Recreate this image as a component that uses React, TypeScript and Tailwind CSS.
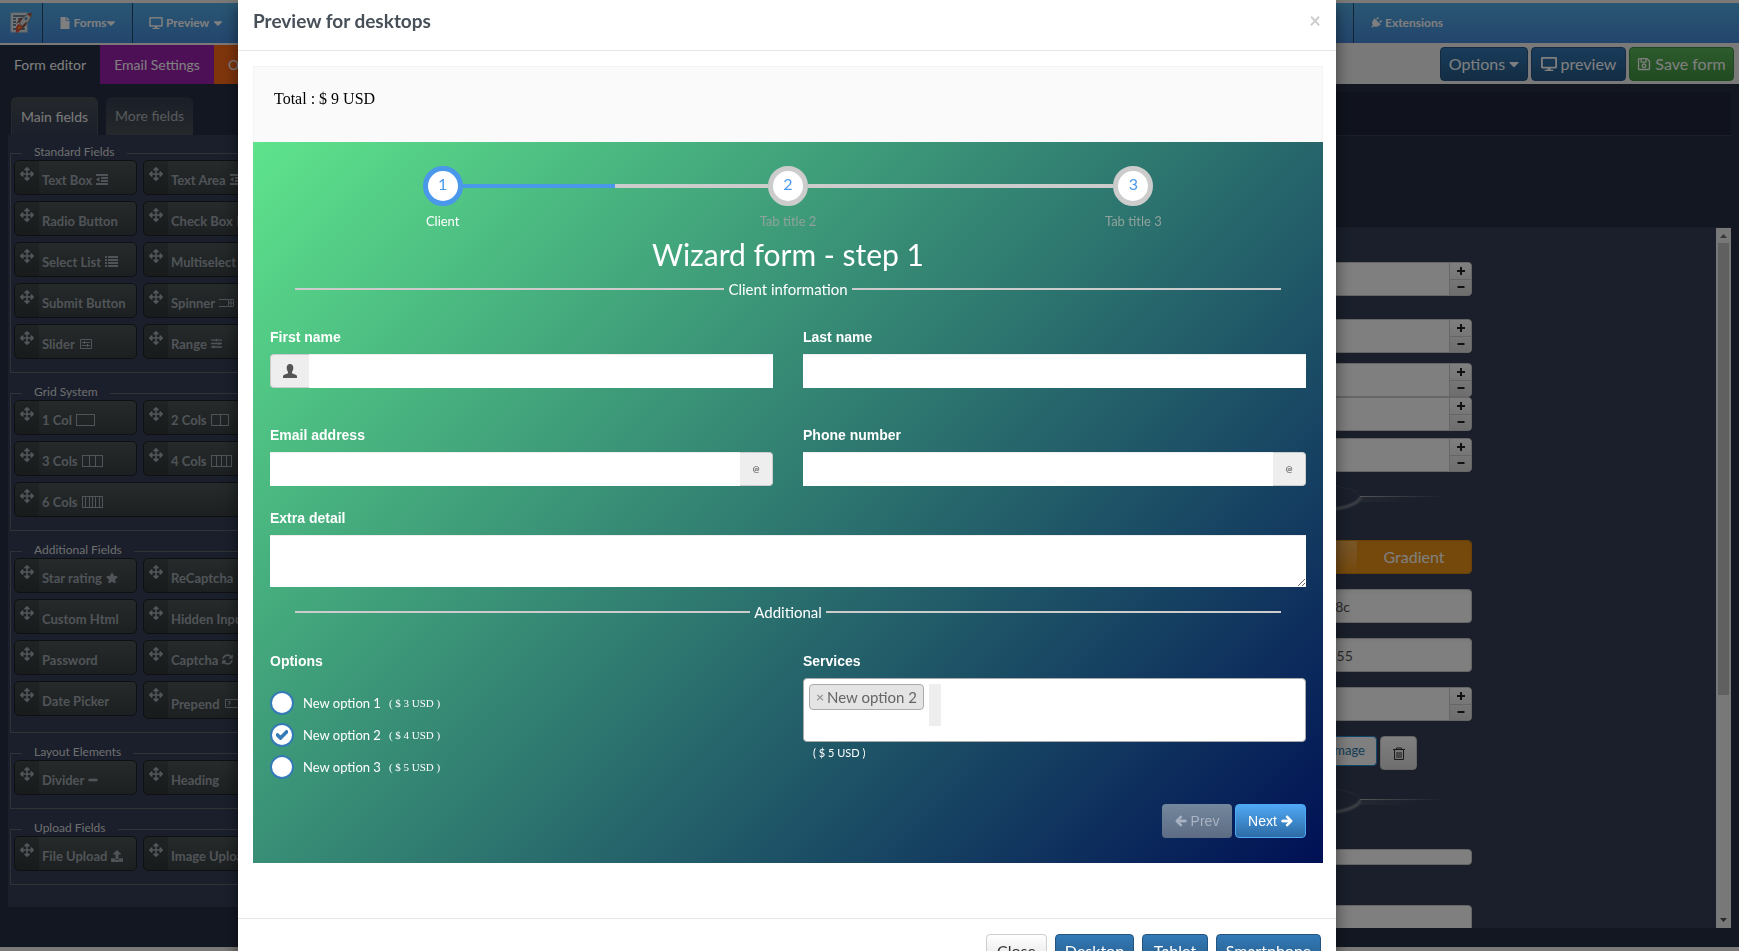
import type { ReactNode } from 'react';
import {
  FaArrowLeft,
  FaArrowRight,
  FaArrowsAlt,
  FaCaretDown,
  FaCheck,
  FaDesktop,
  FaFile,
  FaMinus,
  FaPlug,
  FaRegSave,
  FaSlidersH,
  FaStar,
  FaSyncAlt,
  FaUpload,
} from 'react-icons/fa';

interface Field {
  name: string;
  icon?: ReactNode;
  wide?: boolean;
  tall?: boolean;
}

interface FieldGroup {
  title: string;
  fields: Field[];
}

// Outlined box split into n columns
function ColsIcon({ n, width }: { n: number; width: number }) {
  const step = (width - 1) / n;
  return (
    <svg width={width} height="12" viewBox={`0 0 ${width} 12`} fill="none" stroke="currentColor">
      <rect x="0.5" y="0.5" width={width - 1} height="11" />
      {Array.from({ length: n - 1 }, (_, i) => (
        <path key={i} d={`M${Math.round(step * (i + 1)) + 0.5} 0V12`} />
      ))}
    </svg>
  );
}

function BoxIcon({ d }: { d: string }) {
  return (
    <svg width="15" height="12" viewBox="0 0 15 12" fill="none" stroke="currentColor">
      <path d={d} />
    </svg>
  );
}

function IndentIcon() {
  return (
    <svg width="12" height="11" viewBox="0 0 12 11" fill="currentColor">
      <path d="M0 0h12v2H0zM5 3h7v2H5zM5 6h7v2H5zM0 9h12v2H0zM3.500 3v5L0 5.500z" />
    </svg>
  );
}

function ListIcon() {
  return (
    <svg width="13" height="11" viewBox="0 0 13 11" fill="currentColor">
      <path d="M0 0h2v2H0zM0 3h2v2H0zM0 6h2v2H0zM0 9h2v2H0zM3 0h10v2H3zM3 3h10v2H3zM3 6h10v2H3zM3 9h10v2H3z" />
    </svg>
  );
}

const groups: FieldGroup[] = [
  {
    title: 'Standard Fields',
    fields: [
      { name: 'Text Box', icon: <IndentIcon /> },
      { name: 'Text Area', icon: <IndentIcon /> },
      { name: 'Radio Button' },
      { name: 'Check Box', icon: <BoxIcon d="M1 1h12v10H1zM4 5l3 3 4-5" /> },
      { name: 'Select List', icon: <ListIcon /> },
      { name: 'Multiselect' },
      { name: 'Submit Button' },
      { name: 'Spinner', icon: <BoxIcon d="M0 2.500h9M0 9.500h9M9.500 2.500h5v7h-5zM9.500 6h5M12 2v8" /> },
      { name: 'Slider', icon: <BoxIcon d="M1.500 1.500h11v9h-11zM3 4.500h8M5.500 3v3M3 7.500h8M8.500 6v3" /> },
      { name: 'Range', icon: <FaSlidersH className="h-[11px] w-[11px]" /> },
    ],
  },
  {
    title: 'Grid System',
    fields: [
      { name: '1 Col', icon: <ColsIcon n={1} width={19} /> },
      { name: '2 Cols', icon: <ColsIcon n={2} width={18} /> },
      { name: '3 Cols', icon: <ColsIcon n={3} width={21} /> },
      { name: '4 Cols', icon: <ColsIcon n={4} width={21} /> },
      { name: '6 Cols', icon: <ColsIcon n={6} width={21} />, wide: true },
    ],
  },
  {
    title: 'Additional Fields',
    fields: [
      { name: 'Star rating', icon: <FaStar className="h-3 w-3" /> },
      { name: 'ReCaptcha' },
      { name: 'Custom Html' },
      { name: 'Hidden Input' },
      { name: 'Password' },
      { name: 'Captcha', icon: <FaSyncAlt className="h-[11px] w-[11px]" /> },
      { name: 'Date Picker' },
      { name: 'Prepend', icon: <BoxIcon d="M1 1.500h14M1.500 1v8.500h14M4 3.500h2v2H5v2" />, tall: true },
    ],
  },
  {
    title: 'Layout Elements',
    fields: [{ name: 'Divider', icon: <FaMinus className="h-[10px] w-[10px] stroke-current stroke-[40]" /> }, { name: 'Heading' }],
  },
  {
    title: 'Upload Fields',
    fields: [{ name: 'File Upload', icon: <FaUpload className="h-3 w-3" /> }, { name: 'Image Upload' }],
  },
];

function Logo() {
  return (
    <svg width="22" height="22" viewBox="0 0 22 22">
      <rect x="1" y="1" width="16" height="19" fill="#e9eef2" stroke="#c5ced6" />
      <path d="M3 4h12M3 7h3M8 7h5M3 10h3M3 13h3M3 17h12" stroke="#46627a" strokeWidth="1.3" />
      <path d="M21.500 1c-5.500 1-10 5-12 10l3 3c5.500-2 8.500-7 9-13z" fill="#dcdcdc" stroke="#6f6f6f" strokeWidth="0.8" />
      <path d="M10 10l-4 2 4-6 3-.500zM12.500 13.500l-1 5 5-6v-3z" fill="#8e5547" />
      <circle cx="16" cy="6.5" r="1.5" fill="#4d88b5" />
      <path d="M9 12c-3 1-3.500 5-3 9 2-1 6-3 6-7z" fill="#e0503c" />
      <path d="M9.500 14c-1 .500-1.500 2-1.500 3.500 1-.500 2-1 2.500-2.500z" fill="#f5a623" />
      <path d="M21.500 1l-4 1.300 2.700 2.700z" fill="#c4482d" />
    </svg>
  );
}

function TopNav() {
  return (
    <nav className="flex h-10 bg-gradient-to-b from-[#54aee6] to-[#478bdc] text-xs font-bold text-white">
      <a href="#home" aria-label="Home" className="flex w-[43px] items-center justify-center border-r border-[#27486b]">
        <Logo />
      </a>
      <a href="#forms" className="flex w-[90px] items-center justify-center gap-[3px] border-r border-[#27486b]">
        <FaFile className="h-3 w-3" />
        <span className="flex items-center">Forms <FaCaretDown className="h-[14px] w-[10px]" /></span>
      </a>
      <a href="#preview" className="flex items-center gap-[3px] pl-4">
        <FaDesktop className="h-3 w-[14px]" />
        <span className="flex items-center gap-1">Preview <FaCaretDown className="h-[14px] w-[10px]" /></span>
      </a>
      <a href="#more" aria-label="More" className="flex flex-1 items-center justify-end border-r border-[#27486b] pr-[15px]">
        <FaCaretDown />
      </a>
      <a href="#extensions" className="flex w-[385px] items-center gap-[3px] pl-4">
        <FaPlug className="h-3 w-3 rotate-45" /> Extensions
      </a>
    </nav>
  );
}

function Toolbar() {
  const button =
    'flex h-[34px] items-center justify-center gap-1 whitespace-nowrap rounded border text-base text-white';
  return (
    <div className="mt-0.5 flex h-[39px] bg-[#f2f2f2] text-sm text-white">
      <button className="w-[100px] bg-[#262f43]">Form editor</button>
      <button className="w-[114px] bg-[#9b21ad]">Email Settings</button>
      <button className="bg-[#ff6b18] px-[14px]">Options</button>
      <div className="flex flex-1 justify-end gap-[3px] pr-[5px] pt-0.5">
        <button className={`${button} w-[88px] border-[#2a5580] bg-gradient-to-b from-[#337ab7] to-[#265a88]`}>
          Options <FaCaretDown className="h-4 w-[10px]" />
        </button>
        <button className={`${button} w-[95px] border-[#2a5580] bg-gradient-to-b from-[#337ab7] to-[#265a88]`}>
          <FaDesktop className="h-4 w-4" /> preview
        </button>
        <button className={`${button} w-[105px] border-[#3e8f3e] bg-gradient-to-b from-[#5cb85c] to-[#419641]`}>
          <FaRegSave className="h-[14px] w-[14px]" /> Save form
        </button>
      </div>
    </div>
  );
}

function FieldButton({ name, icon, wide, tall }: Field) {
  return (
    <button
      className={`flex overflow-hidden rounded-[5px] border border-[#1c2024] bg-gradient-to-b from-[#4c5557] to-[#3a4043] text-left ${
        wide ? 'col-span-2' : ''
      } ${tall ? 'h-[38px]' : 'h-[35px]'}`}
    >
      <span className="flex h-full w-6 shrink-0 justify-center bg-black/15 pt-1.5 text-[#a3acb4]">
        <FaArrowsAlt className="h-[14px] w-[14px]" />
      </span>
      <span
        className={`flex items-center gap-1 whitespace-nowrap pl-[3px] text-[13px] font-bold leading-4 text-[#a0a8b0] ${
          tall ? 'pt-2' : 'pt-1'
        }`}
      >
        {name} {icon}
      </span>
    </button>
  );
}

function Sidebar() {
  return (
    <aside className="w-[272px] shrink-0 pl-2 pt-[13px]">
      <div className="flex gap-2 pl-[3px] text-sm">
        <button className="h-[38px] w-[87px] rounded-t-md border border-b-0 border-[#4c5257] bg-gradient-to-b from-[#4a4f55] to-[#343f57] text-[#f4f4f4]">
          Main fields
        </button>
        <button className="h-[38px] w-[87px] rounded-t-md bg-gradient-to-b from-[#343d50] to-[#4b5156] text-[#b0b4b8]">
          More fields
        </button>
      </div>
      <div className="bg-[#343f57] pb-[22px] pl-0.5 pt-[11px]">
        <div className="flex flex-col gap-[13px]">
          {groups.map((group) => (
            <fieldset key={group.title} className="border border-[#62666f] pb-[13px] pl-[3px] pr-1">
              <legend className="ml-2 h-[14px] px-3 text-xs leading-3 text-[#dcdcdc]">{group.title}</legend>
              <div className="grid grid-cols-[123px_123px] items-start gap-1.5">
                {group.fields.map((field) => (
                  <FieldButton key={field.name} {...field} />
                ))}
              </div>
            </fieldset>
          ))}
        </div>
      </div>
    </aside>
  );
}

function SpinInput({ label }: { label: string }) {
  return (
    <div className="flex h-[34px] overflow-hidden rounded border border-[#ccc] bg-white">
      <input aria-label={label} className="min-w-0 flex-1 px-3" />
      <div className="flex w-[22px] flex-col border-l border-[#ccc] bg-gradient-to-b from-white to-[#dcdcdc] text-[#222]">
        <button
          aria-label={`Increase ${label}`}
          className="flex flex-1 items-center justify-center border-b border-[#ccc]"
        >
          <svg width="8" height="8" viewBox="0 0 8 8" stroke="currentColor" strokeWidth="2">
            <path d="M4 0v8M0 4h8" />
          </svg>
        </button>
        <button aria-label={`Decrease ${label}`} className="flex flex-1 items-center justify-center">
          <svg width="8" height="8" viewBox="0 0 8 8" stroke="currentColor" strokeWidth="2">
            <path d="M0.500 4h7" />
          </svg>
        </button>
      </div>
    </div>
  );
}

// Glowing oval with a fading rule on its right
function Ornament({ id }: { id: string }) {
  return (
    <svg className="block w-full" height="34" viewBox="0 0 208 34" preserveAspectRatio="xMaxYMid meet" fill="none">
      <defs>
        <linearGradient id={`${id}-line`} x1="0" x2="1" y1="0" y2="0">
          <stop offset="0" stopColor="#aaa" />
          <stop offset="1" stopColor="#aaa" stopOpacity="0" />
        </linearGradient>
        <filter id={`${id}-glow`} x="-20%" y="-50%" width="140%" height="200%">
          <feGaussianBlur stdDeviation="1.200" />
        </filter>
      </defs>
      <ellipse cx="54" cy="17" rx="42" ry="12" stroke="#596173" strokeOpacity="0.500" />
      <path d="M12 17a42 13 0 0 0 84 0" stroke="#9a9da3" strokeWidth="2" filter={`url(#${id}-glow)`} />
      <rect x="96" y="16" width="84" height="1" fill={`url(#${id}-line)`} />
      <rect x="96" y="17" width="60" height="5" fill={`url(#${id}-line)`} opacity="0.150" />
    </svg>
  );
}

function SettingsPanel() {
  const textInput =
    'block h-[34px] w-full rounded border border-[#ccc] bg-white pl-[31px] text-sm text-[#555] shadow-inner';
  return (
    <section className="flex min-w-0 flex-1 flex-col pb-[19px] pr-2 pt-2">
      <div className="h-11 shrink-0 border-b border-[#343f57] bg-[#20273c]" />
      <div className="mt-[91px] flex min-h-0 flex-1 border-t border-[#303a52] bg-[#343f57]">
        <div className="flex min-w-0 flex-1 justify-end overflow-hidden pr-[244px] pt-[34px]">
          <div className="w-52">
            <SpinInput label="Width" />
            <div className="mt-[23px]"><SpinInput label="Padding top" /></div>
            <div className="mt-2.5"><SpinInput label="Padding right" /></div>
            <SpinInput label="Padding bottom" />
            <div className="mt-[7px]"><SpinInput label="Padding left" /></div>
            <div className="mt-2"><Ornament id="background" /></div>
            <div className="mt-[26px] flex h-[34px] overflow-hidden rounded border border-[#d58512] text-base text-white">
              <button className="flex-1 bg-gradient-to-b from-[#f0ad4e] to-[#eb9316]">Solid</button>
              <button className="w-[114px] bg-[#eb9316] shadow-inner">Gradient</button>
            </div>
            <div className="mt-[15px]">
              <input aria-label="Start color" className={textInput} defaultValue="#5ee48c" />
            </div>
            <div className="mt-[15px]">
              <input aria-label="End color" className={textInput} defaultValue="#001355" />
            </div>
            <div className="mt-[15px]"><SpinInput label="Angle" /></div>
            <div className="mt-[15px] flex items-start gap-[3px]">
              <button className="h-[30px] w-[113px] rounded-sm border border-[#1f8dd6] bg-white pr-[11px] text-right text-[13px] text-[#2a78ad]">
                Select Image
              </button>
              <button
                aria-label="Remove image"
                className="flex h-[34px] w-[37px] items-center justify-center rounded border border-[#ccc] bg-gradient-to-b from-white to-[#dedede] text-[#333]"
              >
                <svg width="12" height="13" viewBox="0 0 12 13" fill="none" stroke="currentColor">
                  <path d="M0 2.500h12M3.500 2.500V1h5v1.500M1.500 3v9.500h9V3M4 5v6M6 5v6M8 5v6" />
                </svg>
              </button>
            </div>
            <div className="mt-[13px]"><Ornament id="shadow" /></div>
            <input aria-label="Shadow" className="mt-8 block h-4 w-full rounded border border-[#ccc] bg-white" />
            <input aria-label="Border" className="mt-10 block h-[34px] w-full rounded border border-[#ccc] bg-white" />
          </div>
        </div>
        <div className="flex w-[15px] flex-col items-center bg-[#f1f1f1]">
          <svg className="h-[15px] w-[15px] shrink-0" viewBox="0 0 15 15" fill="#6e6e6e">
            <path d="M4 10l3.500-4 3.500 4z" />
          </svg>
          <div className="h-[452px] w-[11px] bg-[#c1c1c1]" />
          <div className="flex-1" />
          <svg className="h-[15px] w-[15px] shrink-0" viewBox="0 0 15 15" fill="#505050">
            <path d="M4 5l3.500 4 3.500-4z" />
          </svg>
        </div>
      </div>
    </section>
  );
}

const steps = [
  {
    n: 1,
    title: 'Client',
    left: 'bg-transparent',
    right: 'bg-[#4a98ea]',
    ring: 'border-[#4a98ea]',
    text: 'text-white',
  },
  {
    n: 2,
    title: 'Tab title 2',
    left: 'bg-[#ccc]',
    right: 'bg-[#ccc]',
    ring: 'border-[#ccc]',
    text: 'text-[#8fa39c]',
  },
  {
    n: 3,
    title: 'Tab title 3',
    left: 'bg-[#ccc]',
    right: 'bg-transparent',
    ring: 'border-[#ccc]',
    text: 'text-[#8fa39c]',
  },
];

const options = [
  { name: 'New option 1', price: 3, checked: false },
  { name: 'New option 2', price: 4, checked: true },
  { name: 'New option 3', price: 5, checked: false },
];

function SectionTitle({ children }: { children: ReactNode }) {
  return (
    <div className="flex items-center gap-1 px-[25px] text-[15px] leading-5 text-white">
      <span className="h-0.5 flex-1 bg-[#ccc]" />
      <span>{children}</span>
      <span className="h-0.5 flex-1 bg-[#ccc]" />
    </div>
  );
}

function FormField({ id, label, children }: { id: string; label: string; children: ReactNode }) {
  return (
    <div>
      <label htmlFor={id} className="mb-[7px] block font-['Liberation_Sans',sans-serif] text-sm font-bold leading-5 text-white">
        {label}
      </label>
      {children}
    </div>
  );
}

function WizardForm() {
  const input = 'block h-[34px] w-full min-w-0 border-t border-[#eee] bg-white px-3 text-sm';
  const addon = 'flex shrink-0 items-center justify-center border border-[#ccc] bg-[#eee] text-[#555]';
  return (
    <form className="bg-[linear-gradient(135deg,#5ee48c,#001055)] px-[17px] pb-[25px] pt-6">
      <ol className="flex">
        {steps.map((step) => (
          <li key={step.n} className="flex-1 text-center">
            <div className="flex items-center">
              <span className={`h-1 flex-1 ${step.left}`} />
              <span
                className={`flex h-10 w-10 items-center justify-center rounded-full border-[5px] bg-white pb-1 text-base text-[#4a98ea] ${step.ring}`}
              >
                {step.n}
              </span>
              <span className={`h-1 flex-1 ${step.right}`} />
            </div>
            <p className={`mt-1.5 text-[13px] leading-[18px] ${step.text}`}>{step.title}</p>
          </li>
        ))}
      </ol>
      <h2 className="mb-[5px] mt-1 text-center text-3xl leading-10 text-white">Wizard form - step 1</h2>
      <SectionTitle>Client information</SectionTitle>

      <div className="mt-7 grid grid-cols-2 gap-x-[30px] gap-y-[37px]">
        <FormField id="first-name" label="First name">
          <div className="flex">
            <span className={`${addon} w-[39px] rounded-l border-r-0`}>
              <svg width="14" height="14" viewBox="0 0 14 14" fill="currentColor">
                <path d="M7 0c2 0 3.300 1.400 3.300 3.800 0 1.600-.500 3-1.300 3.900v1.500l3.700 1.600c.800.400 1.300 1 1.300 1.800V14H0v-1.400c0-.800.500-1.400 1.300-1.800L5 9.200V7.700C4.200 6.800 3.700 5.400 3.700 3.800 3.700 1.400 5 0 7 0z" />
              </svg>
            </span>
            <input id="first-name" className={input} />
          </div>
        </FormField>
        <FormField id="last-name" label="Last name">
          <input id="last-name" className={input} />
        </FormField>
        <FormField id="email" label="Email address">
          <div className="flex">
            <input id="email" type="email" className={input} />
            <span className={`${addon} w-[33px] rounded-r border-l-0 text-[8px] font-bold`}>@</span>
          </div>
        </FormField>
        <FormField id="phone" label="Phone number">
          <div className="flex">
            <input id="phone" type="tel" className={input} />
            <span className={`${addon} w-[33px] rounded-r border-l-0 text-[8px] font-bold`}>@</span>
          </div>
        </FormField>
      </div>

      <div className="mb-[15px] mt-[22px]">
        <FormField id="extra" label="Extra detail">
          <textarea id="extra" className="block h-[52px] w-full border-t border-[#eee] bg-white px-3 text-sm" />
        </FormField>
      </div>
      <SectionTitle>Additional</SectionTitle>

      <div className="mt-[29px] grid grid-cols-2 gap-x-[30px]">
        <fieldset>
          <legend className="mb-5 font-['Liberation_Sans',sans-serif] text-sm font-bold leading-5 text-white">
            Options
          </legend>
          <div className="flex flex-col gap-2">
            {options.map((option) => (
              <label key={option.name} className="flex h-6 items-center text-[13px] leading-5 text-white">
                <span className="relative mr-[9px] h-6 w-6">
                  <input
                    type="checkbox"
                    defaultChecked={option.checked}
                    className="peer block h-6 w-6 appearance-none rounded-full border-2 border-[#337ab7] bg-white"
                  />
                  <FaCheck className="pointer-events-none absolute left-[6px] top-[6px] hidden h-3 w-3 stroke-[#337ab7] stroke-[50] text-[#337ab7] peer-checked:block" />
                </span>
                {option.name}
                <span className="ml-2 font-['Liberation_Serif',serif] text-[11px]">( $ {option.price} USD )</span>
              </label>
            ))}
          </div>
        </fieldset>
        <FormField id="services" label="Services">
          <div className="flex h-16 items-start gap-[5px] rounded border border-[#aaa] bg-white px-[5px] pt-[5px]">
            <span className="flex h-[26px] items-center rounded border border-[#aaa] bg-[#e4e4e4] px-1.5 text-[15px] text-[#666]">
              <button type="button" aria-label="Remove New option 2" className="w-[11px] text-left text-sm font-bold text-[#999]">
                ×
              </button>
              New option 2
            </span>
            <input id="services" className="block h-[42px] w-3 bg-[#eee]" />
          </div>
          <p className="mt-0.5 pl-2.5 text-[11px] leading-[18px] text-white">( $ 5 USD )</p>
        </FormField>
      </div>

      <div className="mt-[25px] flex justify-end gap-[3px] font-['Liberation_Sans',sans-serif] text-sm">
        <button
          type="button"
          disabled
          className="flex h-[34px] w-[70px] items-center justify-center gap-1 rounded bg-gradient-to-b from-[#73879d] to-[#5d6c84] text-[#a9b3c3]"
        >
          <FaArrowLeft className="h-3 w-3 stroke-current stroke-[40]" /> Prev
        </button>
        <button
          type="button"
          className="flex h-[34px] w-[71px] items-center justify-center gap-1 rounded border border-[#4fa8f5] bg-gradient-to-b from-[#4fa8f5] to-[#2d6ca6] text-white"
        >
          Next <FaArrowRight className="h-3 w-3 stroke-current stroke-[40]" />
        </button>
      </div>
    </form>
  );
}

function PreviewModal() {
  const primary =
    'h-[34px] rounded border border-[#245580] bg-gradient-to-b from-[#337ab7] to-[#265a88] text-base text-white';
  return (
    <div role="dialog" aria-label="Preview for desktops" className="ml-[238px] mr-[403px] bg-white shadow-[0_5px_15px_rgba(0,0,0,0.5)]">
      <header className="flex items-center justify-between border-b border-[#e5e5e5] px-[15px] pb-[9px]">
        <h1 className="text-[19px] font-bold leading-[41px] text-[#474f59]">Preview for desktops</h1>
        <button aria-label="Close" className="w-3 text-xl font-bold leading-[41px] text-[#ccc]">
          ×
        </button>
      </header>
      <div className="pl-[15px] pr-[13px] pt-[15px]">
        <div className="h-[76px] border border-b-0 border-[#f4f4f4] bg-[#fafafa] px-5 pt-5 font-['Liberation_Serif',serif] text-base text-black">
          Total : $ 9 USD
        </div>
        <WizardForm />
      </div>
      <footer className="mt-[55px] flex justify-end gap-2 border-t border-[#e5e5e5] p-[15px]">
        <button className="h-[34px] w-[61px] rounded border border-[#ccc] bg-gradient-to-b from-white to-[#e0e0e0] text-base text-[#333]">
          Close
        </button>
        <button className={`${primary} w-[79px]`}>Desktop</button>
        <button className={`${primary} w-[66px]`}>Tablet</button>
        <button className={`${primary} w-[105px]`}>Smartphone</button>
      </footer>
    </div>
  );
}

export default function App() {
  return (
    <div className="h-screen overflow-hidden font-['Lato','Open_Sans',sans-serif]">
      <div className="flex h-full flex-col bg-[#f5f2ee] pb-1 pt-[3px]">
        <TopNav />
        <Toolbar />
        <div className="flex min-h-0 flex-1 bg-[#262f43]">
          <Sidebar />
          <SettingsPanel />
        </div>
      </div>
      <div className="fixed inset-0 overflow-hidden bg-black/50">
        <PreviewModal />
      </div>
    </div>
  );
}
